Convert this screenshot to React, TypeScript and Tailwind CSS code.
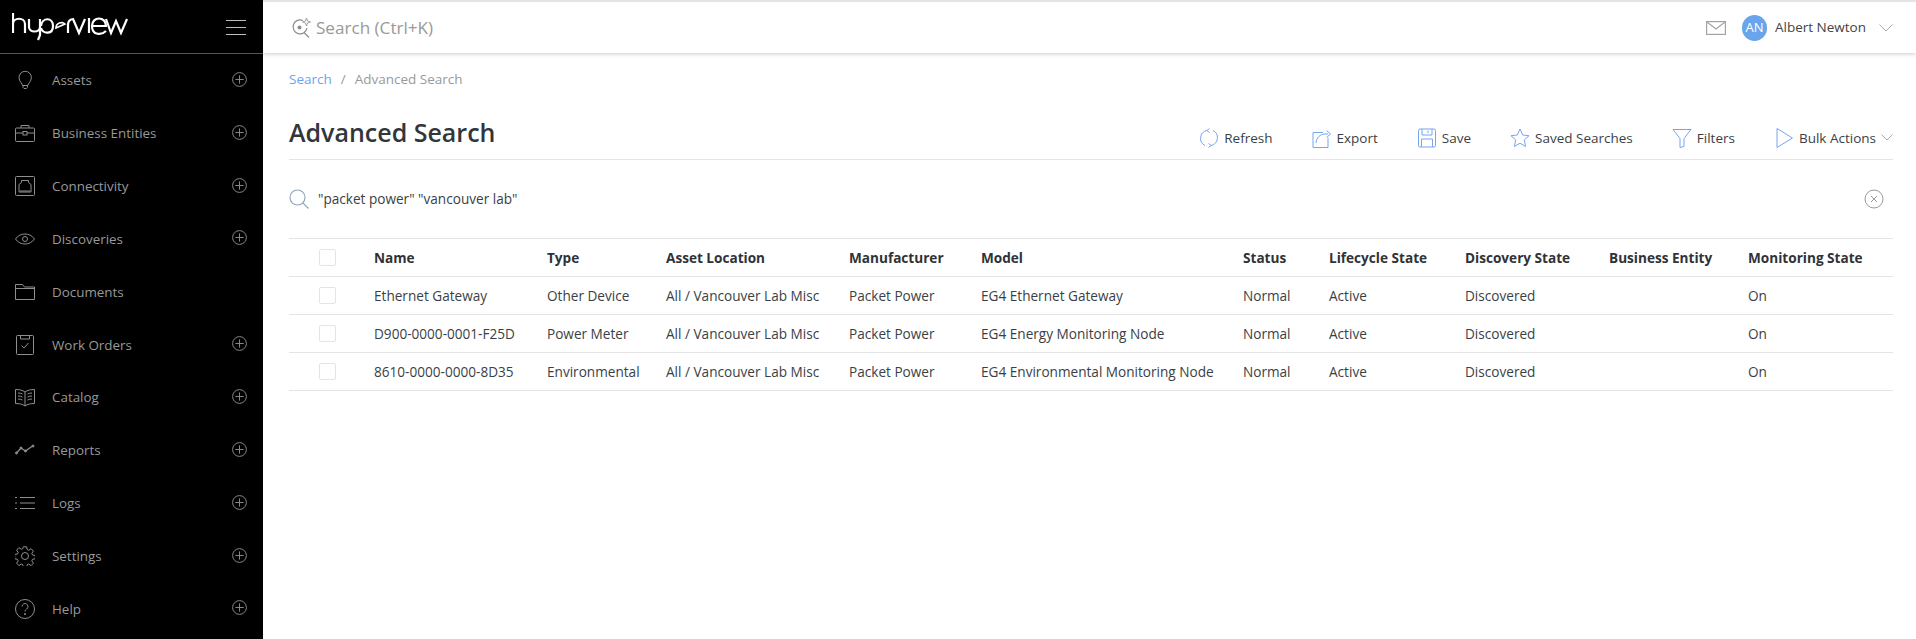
import type { ReactNode } from "react";

const FONT = "font-['Open_Sans','Noto_Sans',sans-serif]";

function Ico({ size = 20, className = "", children }: { size?: number; className?: string; children: ReactNode }) {
  return (
    <svg width={size} height={size} viewBox="0 0 20 20" fill="none" stroke="currentColor" strokeWidth={1} className={className}>
      {children}
    </svg>
  );
}

const NAV: { label: string; plus: boolean; icon: ReactNode }[] = [
  {
    label: "Assets",
    plus: true,
    icon: (
      <Ico>
        <path d="M7.500 15.500c0-2-3.500-4-3.500-8a6.200 6.200 0 0 1 12.400 0c0 4-3.500 6-3.500 8z" />
        <path d="M8 15.500v2l1 1h2.400l1-1v-2" />
      </Ico>
    ),
  },
  {
    label: "Business Entities",
    plus: true,
    icon: (
      <Ico>
        <rect x="0.500" y="5" width="19" height="13.500" rx="1" />
        <path d="M6 5V2.500h8V5M0.500 10h7.500M12 10h7.500" />
        <rect x="8" y="8.500" width="4" height="3.500" />
      </Ico>
    ),
  },
  {
    label: "Connectivity",
    plus: true,
    icon: (
      <Ico>
        <rect x="0.500" y="0.500" width="19" height="19" rx="1" />
        <path d="M4 16V8.500l2.500-2V4.500h7v2l2.500 2V16zM6 16v-2M8 16v-2M10 16v-2M12 16v-2M14 16v-2" />
      </Ico>
    ),
  },
  {
    label: "Discoveries",
    plus: true,
    icon: (
      <Ico>
        <path d="M0.500 10C3 6.500 6.300 5 10 5s7 1.500 9.500 5c-2.500 3.500-5.800 5-9.500 5s-7-1.500-9.500-5z" />
        <circle cx="10" cy="10" r="2.500" />
      </Ico>
    ),
  },
  {
    label: "Documents",
    plus: false,
    icon: (
      <Ico>
        <path d="M0.500 17.500V2.500h7l2 2.500h10v12.500z" />
        <path d="M0.500 6.500h19" />
      </Ico>
    ),
  },
  {
    label: "Work Orders",
    plus: true,
    icon: (
      <Ico>
        <rect x="1.500" y="0.500" width="17" height="19" rx="1" />
        <path d="M5.500 0.500v3.500h9V0.500M6.500 10.500l2.500 2.500 4.500-5" />
      </Ico>
    ),
  },
  {
    label: "Catalog",
    plus: true,
    icon: (
      <Ico>
        <path d="M10 5C7.500 3 4 2.500 0.500 2.500v14c3.500 0 7 .5 9.500 2.500 2.500-2 6-2.500 9.500-2.500v-14C16 2.500 12.500 3 10 5zM10 5v14" />
        <path d="M3 6c1.500 0 3 .3 4.500 1M3 9c1.500 0 3 .3 4.500 1M3 12c1.500 0 3 .3 4.500 1M17 6c-1.500 0-3 .3-4.500 1M17 9c-1.500 0-3 .3-4.500 1M17 12c-1.500 0-3 .3-4.500 1" />
      </Ico>
    ),
  },
  {
    label: "Reports",
    plus: true,
    icon: (
      <Ico>
        <path d="M1.500 13l4.500-5 4.500 3 7-5" strokeWidth={1.300} />
        <circle cx="1.500" cy="13" r="1" fill="currentColor" />
        <circle cx="6" cy="8" r="1" fill="currentColor" />
        <circle cx="10.500" cy="11" r="1" fill="currentColor" />
        <circle cx="18" cy="6" r="1" fill="currentColor" />
      </Ico>
    ),
  },
  {
    label: "Logs",
    plus: true,
    icon: (
      <Ico>
        <path d="M5 4.500h15M5 10h15M5 15.500h15" />
        <path d="M0 4.500h2M0 10h2M0 15.500h2" />
      </Ico>
    ),
  },
  {
    label: "Settings",
    plus: true,
    icon: (
      <Ico>
        <path d="M8.300 0.800h3.400l.5 2.800 1.500.7 2.400-1.600 2.300 2.400-1.600 2.300.7 1.600 2.800.5v3.300l-2.800.5-.7 1.600 1.600 2.300-2.300 2.400-2.400-1.600-1.500.7-.5 2.800H8.300l-.5-2.800-1.500-.7-2.400 1.600-2.300-2.400 1.600-2.300-.7-1.600-2.800-.5V8.500l2.800-.5.7-1.600-1.600-2.300 2.300-2.400 2.400 1.600 1.500-.7z" />
        <circle cx="10" cy="10" r="3.500" />
      </Ico>
    ),
  },
  {
    label: "Help",
    plus: true,
    icon: (
      <Ico>
        <circle cx="10" cy="10" r="9.500" />
        <path d="M7 7.500a3 3 0 1 1 4.700 2.500c-1 .7-1.700 1.200-1.700 2.500" />
        <circle cx="10" cy="15" r=".6" fill="currentColor" />
      </Ico>
    ),
  },
];

const COLS = [
  { name: "", w: "w-[85px]" },
  { name: "Name", w: "w-[173px]" },
  { name: "Type", w: "w-[119px]" },
  { name: "Asset Location", w: "w-[183px]" },
  { name: "Manufacturer", w: "w-[132px]" },
  { name: "Model", w: "w-[262px]" },
  { name: "Status", w: "w-[86px]" },
  { name: "Lifecycle State", w: "w-[136px]" },
  { name: "Discovery State", w: "w-[144px]" },
  { name: "Business Entity", w: "w-[139px]" },
  { name: "Monitoring State", w: "w-[145px]" },
];

const ROWS = [
  ["Ethernet Gateway", "Other Device", "EG4 Ethernet Gateway"],
  ["D900-0000-0001-F25D", "Power Meter", "EG4 Energy Monitoring Node"],
  ["8610-0000-0000-8D35", "Environmental", "EG4 Environmental Monitoring Node"],
];

function Plus() {
  return (
    <Ico size={15} className="text-[#8a8a8a] mb-[2px]">
      <circle cx="10" cy="10" r="9.200" strokeWidth={1.300} />
      <path d="M10 4.500v11M4.500 10h11" strokeWidth={1.300} />
    </Ico>
  );
}

function Sidebar() {
  return (
    <aside className="w-[263px] h-[639px] shrink-0 bg-black flex flex-col">
      <div className="h-[53px] mt-px shrink-0 border-b border-[#555] flex items-center justify-between pl-[12px] pr-[17px]">
        <svg width="116" height="28" viewBox="0 0 116 28" fill="none" stroke="white" strokeWidth={2.200} className="mt-[-1px]">
          <path d="M1 0v20M1 11c0-7 12-7 12 0v9" />
          <path d="M17 6v8c0 6 11 6 11 0V6M28 6v16l-2 5" />
          <path d="M29 13c1-9 12-9 12 0s-10 8-12 2" />
          <path d="M44 15c0-5 6-7 9-4z" strokeWidth={1.700} />
          <path d="M56 20v-8c0-4 2-6 6-6" />
          <path d="M61 6l6 14 6-14M77 5v15" />
          <path d="M80 13h14c0-10-14-10-14 0s10 9 14 5" />
          <path d="M94 6l5 14 5-12 5 12 6-14" />
        </svg>
        <svg width="20" height="15" viewBox="0 0 20 15" stroke="#bdbdbd" strokeWidth={1}>
          <path d="M0 .5h20M0 7.500h20M0 14.500h20" />
        </svg>
      </div>
      <nav className="flex flex-col">
        {NAV.map((item) => (
          <div key={item.label} className="h-[52.85px] shrink-0 flex items-center pl-[15px] pr-[16px] text-[#8f8f8f]">
            <span className="w-[20px] h-[20px] shrink-0 mr-[17px]">{item.icon}</span>
            <span className="flex-1 text-[13.4px] text-[#999]">{item.label}</span>
            {item.plus && <Plus />}
          </div>
        ))}
      </nav>
    </aside>
  );
}

function TopBar() {
  return (
    <header className="h-[53px] shrink-0 border-t-2 border-[#e4e4e4] bg-white shadow-[0_1px_4px_rgba(0,0,0,0.2)] flex items-center pl-[28px] pr-[23px]">
      <svg width="20" height="20" viewBox="0 0 20 20" fill="none" stroke="#8c8c8c" strokeWidth={1.200}>
        <path d="M12 2.500a7 7 0 1 0 4 7.500M13 14.500l5 5" />
        <path d="M15.500 0l1 3 3 1-3 1-1 3-1-3-3-1 3-1z" strokeWidth={.8} />
        <circle cx="8.500" cy="9.500" r="2" fill="#8c8c8c" stroke="none" />
      </svg>
      <span className="ml-[5px] text-[17.1px] text-[#999]">Search (Ctrl+K)</span>
      <div className="ml-auto flex items-center">
        <svg width="20" height="14" viewBox="0 0 20 14" fill="none" stroke="#a3a3a3" strokeWidth={1.200}>
          <rect x="0.600" y="0.600" width="18.800" height="12.800" />
          <path d="M1 1l9 7 9-7" />
        </svg>
        <span className="ml-[16px] w-[25px] h-[26px] rounded-full bg-[#69a5ec] text-white text-[13px] font-medium flex items-center justify-center">AN</span>
        <span className="ml-[8px] text-[13.5px] text-[#444]">Albert Newton</span>
        <svg width="14" height="8" viewBox="0 0 14 8" fill="none" stroke="#aaa" className="ml-[13px]">
          <path d="M.5.500l6.500 6.500 6.500-6.500" />
        </svg>
      </div>
    </header>
  );
}

function Action({ icon, label, className = "" }: { icon: ReactNode; label: string; className?: string }) {
  return (
    <div className={`flex items-center text-[13.5px] text-[#3a3f45] ${className}`}>
      {icon}
      <span className="ml-[5px]">{label}</span>
    </div>
  );
}

function Toolbar() {
  const icon = "text-[#74a5f2]";
  return (
    <div className="flex items-center mb-[11px]">
      <Action
        icon={
          <Ico className={icon}>
            <path d="M8 2.500a8 8 0 0 0-2 15M12 17.500a8 8 0 0 0 2-15" />
            <path d="M10.500 0.500L8 2.500l2.500 2M9.500 19.500l2.500-2-2.500-2" />
          </Ico>
        }
        label="Refresh"
      />
      <Action
        className="ml-[39px]"
        icon={
          <Ico className={icon}>
            <path d="M11 4.500H1v15h15V10" />
            <path d="M4 15c.5-5 4-9 9-9h3M14.500 2.500l4 3.500-4 3.500" />
          </Ico>
        }
        label="Export"
      />
      <Action
        className="ml-[39px]"
        icon={
          <Ico className={icon}>
            <rect x="1.500" y="1" width="17" height="18" rx="1.500" />
            <path d="M5 1v6h10V1M4.500 19v-8h11v8M11 2.500V5" />
          </Ico>
        }
        label="Save"
      />
      <Action
        className="ml-[39px]"
        icon={
          <Ico className={icon}>
            <path d="M10 1l2.700 6 6.300.7-4.700 4.300 1.300 6.500-5.600-3.300-5.600 3.300 1.300-6.500L1 7.700 7.300 7z" />
          </Ico>
        }
        label="Saved Searches"
      />
      <Action
        className="ml-[39px]"
        icon={
          <Ico className={icon}>
            <path d="M1 1.500h18L12 10.500v8l-4 1v-9z" />
          </Ico>
        }
        label="Filters"
      />
      <Action
        className="ml-[39px]"
        icon={
          <Ico className={icon}>
            <path d="M3 .5v19L18.500 10z" />
          </Ico>
        }
        label="Bulk Actions"
      />
      <svg width="12" height="7" viewBox="0 0 12 7" fill="none" stroke="#aaa" className="ml-[5px]">
        <path d="M.5.500l5.500 5.500 5.500-5.500" />
      </svg>
    </div>
  );
}

function Box() {
  return <div className="ml-[30px] w-[17px] h-[17px] border border-[#e4e4e4] rounded-[2px]" />;
}

function ResultsTable() {
  return (
    <table className="w-full table-fixed border-collapse text-[13.6px] text-[#3a3f45]">
      <thead>
        <tr className="h-[38px] border-y border-[#e4e4e4]">
          {COLS.map((c, i) => (
            <th key={i} className={`${c.w} text-left font-bold text-[#2f3338] p-0 ${i === 0 ? "" : "pt-px"}`}>
              {i === 0 ? <Box /> : c.name}
            </th>
          ))}
        </tr>
      </thead>
      <tbody>
        {ROWS.map((r) => (
          <tr key={r[0]} className="h-[38px] border-b border-[#e4e4e4]">
            <td className="p-0"><Box /></td>
            <td className="p-0 pt-px">{r[0]}</td>
            <td className="p-0 pt-px">{r[1]}</td>
            <td className="p-0 pt-px">All / Vancouver Lab Misc</td>
            <td className="p-0 pt-px">Packet Power</td>
            <td className="p-0 pt-px">{r[2]}</td>
            <td className="p-0 pt-px">Normal</td>
            <td className="p-0 pt-px">Active</td>
            <td className="p-0 pt-px">Discovered</td>
            <td className="p-0"></td>
            <td className="p-0 pt-px">On</td>
          </tr>
        ))}
      </tbody>
    </table>
  );
}

export default function App() {
  return (
    <div className={`w-[1916px] h-[639px] overflow-hidden flex bg-white ${FONT}`}>
      <Sidebar />
      <div className="flex-1 min-w-0 flex flex-col">
        <TopBar />
        <main className="flex-1 pl-[26px] pr-[23px]">
          <div className="mt-[16px] text-[13.5px] leading-[20px] text-[#999] flex gap-[9px]">
            <span className="text-[#6aa5f0]">Search</span>
            <span>/</span>
            <span>Advanced Search</span>
          </div>
          <div className="h-[71px] flex items-end justify-between border-b border-[#e4e4e4]">
            <h1 className="text-[25px] font-semibold text-[#32363b] mb-[8px]">Advanced Search</h1>
            <Toolbar />
          </div>
          <div className="h-[78px] flex items-center pr-[9px]">
            <svg width="20" height="20" viewBox="0 0 20 20" fill="none" stroke="#8fa3ba" strokeWidth={1.100}>
              <circle cx="8.500" cy="8.500" r="7.500" />
              <path d="M14 14l5.500 5.500" />
            </svg>
            <span className="ml-[9px] text-[13.6px] text-[#3a3f45]">"packet power" "vancouver lab"</span>
            <svg width="20" height="20" viewBox="0 0 20 20" fill="none" stroke="#999" className="ml-auto">
              <circle cx="10" cy="10" r="9" />
              <path d="M7 7l6 6M13 7l-6 6" />
            </svg>
          </div>
          <ResultsTable />
        </main>
      </div>
    </div>
  );
}
